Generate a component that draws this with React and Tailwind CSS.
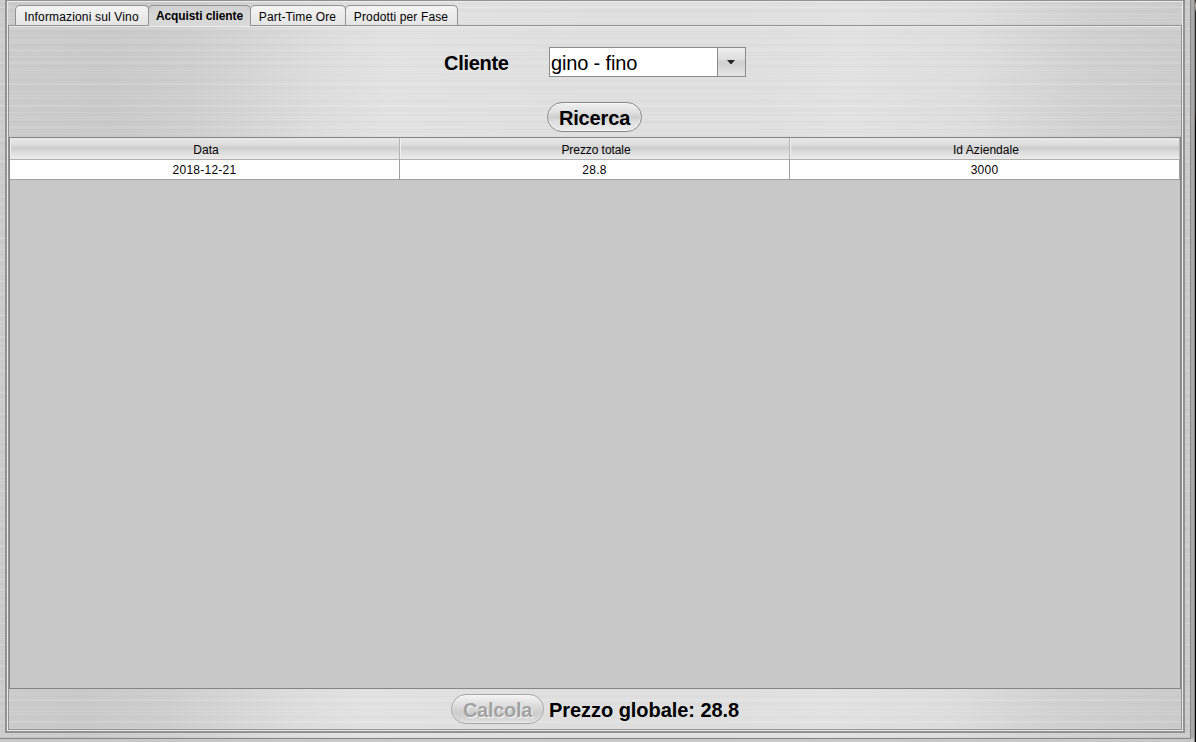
const METAL =
  "bg-[repeating-linear-gradient(180deg,rgba(255,255,255,0.1)_0px,rgba(255,255,255,0.1)_1px,rgba(255,255,255,0)_1px,rgba(255,255,255,0)_3px,rgba(0,0,0,0.014)_3px,rgba(0,0,0,0.014)_4px,rgba(0,0,0,0)_4px,rgba(0,0,0,0)_7px),repeating-linear-gradient(180deg,rgba(0,0,0,0.012)_0px,rgba(0,0,0,0.012)_1px,rgba(255,255,255,0)_1px,rgba(255,255,255,0)_6px,rgba(255,255,255,0.08)_6px,rgba(255,255,255,0.08)_8px,rgba(0,0,0,0)_8px,rgba(0,0,0,0)_11px),linear-gradient(92deg,#cccccc_0%,#c9c9c9_9%,#cecece_16%,#dcdcdc_26%,#e2e2e2_32%,#dfdfdf_48%,#dfdfdf_62%,#e2e2e2_70%,#dddddd_80%,#d0d0d0_90%,#cacaca_100%)]";

const tabs = [
  { label: "Informazioni sul Vino", width: "w-[134px]", tracking: "tracking-[0.16px]" },
  { label: "Acquisti cliente", width: "w-[103px]", tracking: "tracking-[-0.1px]", active: true },
  { label: "Part-Time Ore", width: "w-[96px]", tracking: "tracking-[0.13px]" },
  { label: "Prodotti per Fase", width: "w-[113px]", tracking: "tracking-[0.13px]" },
];

const columns = [
  { name: "Data", tracking: "tracking-normal" },
  { name: "Prezzo totale", tracking: "tracking-[-0.07px]" },
  { name: "Id Aziendale", tracking: "tracking-[0.06px]" },
];
const rows = [["2018-12-21", "28.8", "3000"]];

function Tab({ label, width, tracking, active }) {
  return (
    <div
      className={`-mr-px flex justify-center rounded-t-[5px] border border-b-0 border-[#919191] whitespace-nowrap text-[12px] leading-[14px] ${width} ${tracking} ${
        active
          ? "relative h-[21px] bg-gradient-to-b from-[#d2d2d2] to-[#dadada] pt-[3px] font-bold"
          : "h-5 bg-gradient-to-b from-[#f4f4f4] to-[#e4e4e4] pt-1 pr-px"
      }`}
    >
      {label}
    </div>
  );
}

function PillButton({ children, className, disabled }) {
  return (
    <button
      type="button"
      disabled={disabled}
      className={`flex h-[30px] items-center justify-center rounded-full border text-[20px] font-bold leading-none ${className}`}
    >
      {children}
    </button>
  );
}

export default function App() {
  return (
    <div className="flex h-[742px] w-[1196px] overflow-hidden bg-[#c8c8c8] font-['Liberation_Sans',Arial,sans-serif] text-black">
      <div className="flex w-[1191px] flex-col">
        <div className={`flex h-[739px] border-r border-b border-[#858585] pl-[5px] ${METAL}`}>
          <div className="h-[733px] w-[1180px] border-2 border-t border-[#919191]">
            <div className="flex h-[730px] flex-col border border-[#ececec]">
              <div className="flex h-[23px] items-start pt-[3px] pl-[7px]">
                {tabs.map((tab) => (
                  <Tab key={tab.label} {...tab} />
                ))}
              </div>
              <div className="flex flex-1 flex-col border border-[#919191]">
                <div className="flex h-[111px] flex-col items-center border-t border-[#ececec] pt-5">
                  <div className="flex h-[30px] items-center gap-[40px]">
                    <label className="w-[65px] pt-[2px] text-[20px] font-bold leading-none tracking-[-0.3px]">
                      Cliente
                    </label>
                    <div className="flex h-[30px] w-[197px] border border-[#8a8a8a]">
                      <div className="w-[167px] bg-white pt-[5px] pl-[1px] text-[20px] leading-5 tracking-[-0.15px]">
                        gino - fino
                      </div>
                      <div className="flex flex-1 items-center justify-center border-l border-[#8a8a8a] bg-[linear-gradient(180deg,#eeeeee,#dedede_40%,#cfcfcf_50%,#e6e6e6)] pr-px">
                        <svg width="8" height="5" viewBox="0 0 8 5" className="text-[#222]">
                          <path d="M0 0h8L4.5 4h-1z" fill="currentColor" />
                        </svg>
                      </div>
                    </div>
                  </div>
                  <PillButton className="mt-[25px] mr-px w-[95px] border-[#8a8a8a] bg-[linear-gradient(180deg,#f0f0f0,#dedede_35%,#cecece_50%,#dedede_65%,#ebebeb)] pt-[2px] tracking-[-0.15px] shadow-[inset_0_0_0_1px_rgba(255,255,255,0.45)]">
                    Ricerca
                  </PillButton>
                </div>
                <div className="h-[552px] border border-[#858585] bg-[#c8c8c8]">
                  <div className="grid h-[22px] grid-cols-3 border-b border-[#b0b0b0] bg-[linear-gradient(180deg,#e8e8e8,#dedede_30%,#cdcdcd_48%,#dadada_62%,#ececec)]">
                    {columns.map(({ name, tracking }) => (
                      <div
                        key={name}
                        className={`border-r border-[#b4b4b4] pt-[5px] pl-[3px] text-center text-[12px] leading-[14px] shadow-[inset_1px_0_0_#f0f0f0] ${tracking}`}
                      >
                        {name}
                      </div>
                    ))}
                  </div>
                  {rows.map((row) => (
                    <div key={row[0]} className="grid h-5 grid-cols-3 border-b border-[#a0a0a0] bg-white">
                      {row.map((cell) => (
                        <div
                          key={cell}
                          className="border-r border-[#a0a0a0] pt-[3px] text-center text-[12px] leading-[14px] tracking-[0.25px]"
                        >
                          {cell}
                        </div>
                      ))}
                    </div>
                  ))}
                </div>
                <div className="flex items-center justify-center gap-[5px] pt-[5px]">
                  <PillButton
                    disabled
                    className="w-[93px] border-[#a5a5a5] bg-[linear-gradient(180deg,#f4f4f4,#dedede_35%,#cccccc_65%,#d6d6d6_85%,#e2e2e2)] pt-[2px] tracking-[-0.3px] text-[#a3a3a3] shadow-[inset_0_0_0_1px_rgba(255,255,255,0.3)] [text-shadow:1px_1px_0_#f8f8f8]"
                  >
                    Calcola
                  </PillButton>
                  <div className="w-[190px] pt-[2px] text-[20px] font-bold leading-none tracking-[-0.05px] whitespace-nowrap">
                    Prezzo globale: 28.8
                  </div>
                </div>
              </div>
            </div>
          </div>
        </div>
      </div>
      <div className="w-[3px] bg-[linear-gradient(180deg,#a8a8a8_0px,#a8a8a8_738px,#c8c8c8_739px)]" />
      <div className="w-[1px] bg-[#858585]" />
      <div className="w-[1px] bg-[linear-gradient(180deg,#222_0px,#b5aca4_5px,#8d8580_9px,#29211c_12px,#2b231f_110px,#000_125px)]" />
    </div>
  );
}
